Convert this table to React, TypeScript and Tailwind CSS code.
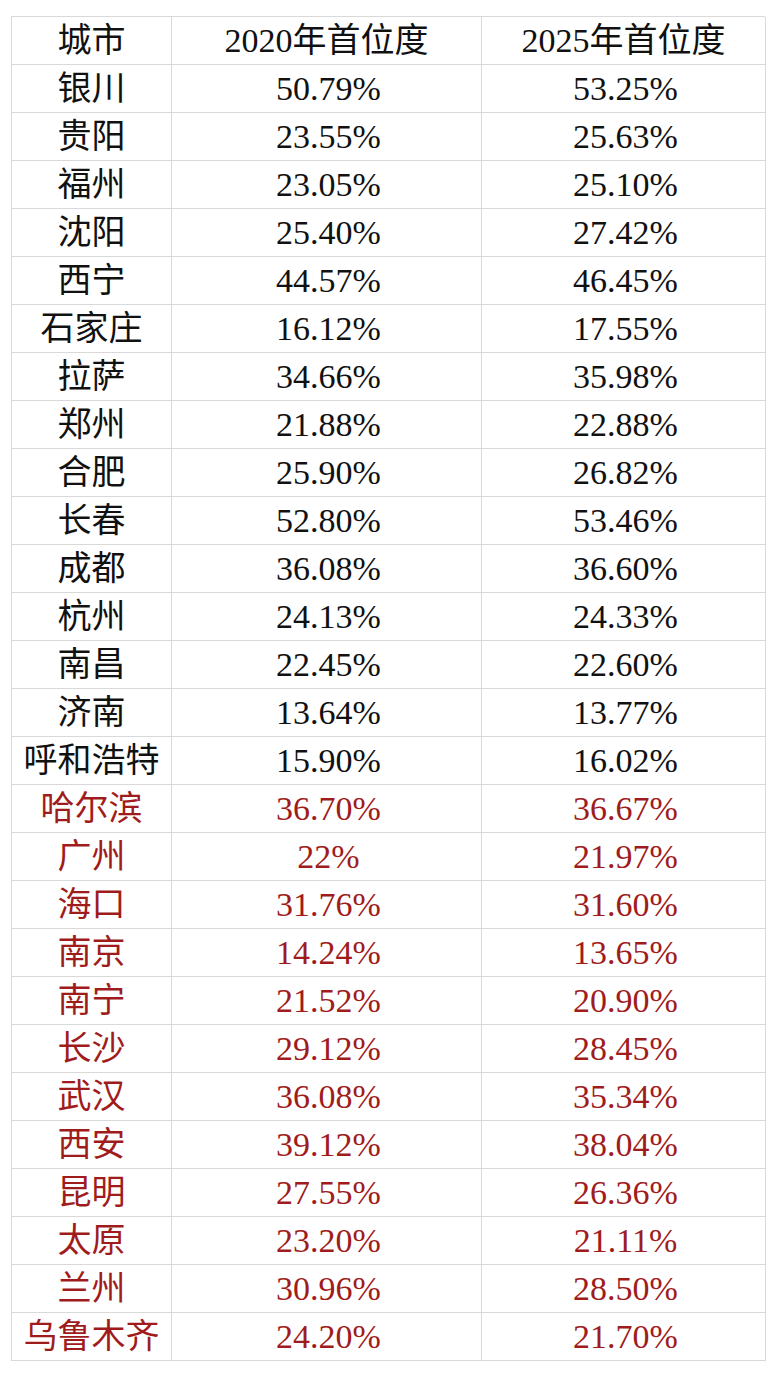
const rows: [string, string, string, boolean][] = [
  ["银川", "50.79%", "53.25%", false],
  ["贵阳", "23.55%", "25.63%", false],
  ["福州", "23.05%", "25.10%", false],
  ["沈阳", "25.40%", "27.42%", false],
  ["西宁", "44.57%", "46.45%", false],
  ["石家庄", "16.12%", "17.55%", false],
  ["拉萨", "34.66%", "35.98%", false],
  ["郑州", "21.88%", "22.88%", false],
  ["合肥", "25.90%", "26.82%", false],
  ["长春", "52.80%", "53.46%", false],
  ["成都", "36.08%", "36.60%", false],
  ["杭州", "24.13%", "24.33%", false],
  ["南昌", "22.45%", "22.60%", false],
  ["济南", "13.64%", "13.77%", false],
  ["呼和浩特", "15.90%", "16.02%", false],
  ["哈尔滨", "36.70%", "36.67%", true],
  ["广州", "22%", "21.97%", true],
  ["海口", "31.76%", "31.60%", true],
  ["南京", "14.24%", "13.65%", true],
  ["南宁", "21.52%", "20.90%", true],
  ["长沙", "29.12%", "28.45%", true],
  ["武汉", "36.08%", "35.34%", true],
  ["西安", "39.12%", "38.04%", true],
  ["昆明", "27.55%", "26.36%", true],
  ["太原", "23.20%", "21.11%", true],
  ["兰州", "30.96%", "28.50%", true],
  ["乌鲁木齐", "24.20%", "21.70%", true],
];

const cell =
  "flex h-[48px] items-center justify-center border-r border-b border-[#d9d9d9] leading-none";

export default function App() {
  return (
    <div
      className="min-h-[1376px] w-[768px] bg-white pt-[16px] pl-[11px]"
      style={{ fontFamily: '"Liberation Serif", "Noto Sans CJK SC", serif' }}
    >
      <div className="grid w-[754px] grid-cols-[160px_310px_284px] border-t border-l border-[#d9d9d9] text-[34px] text-[#111]">
        <div className={cell}>城市</div>
        <div className={cell}>2020年首位度</div>
        <div className={cell}>2025年首位度</div>
        {rows.map(([city, a, b, red]) => (
          <div key={city} className="contents">
            <div className={`${cell} ${red ? "text-[#a01c1c]" : ""}`}>{city}</div>
            <div className={`${cell} pl-[4px] ${red ? "text-[#a01c1c]" : ""}`}>{a}</div>
            <div className={`${cell} pl-[4px] ${red ? "text-[#a01c1c]" : ""}`}>{b}</div>
          </div>
        ))}
      </div>
    </div>
  );
}
